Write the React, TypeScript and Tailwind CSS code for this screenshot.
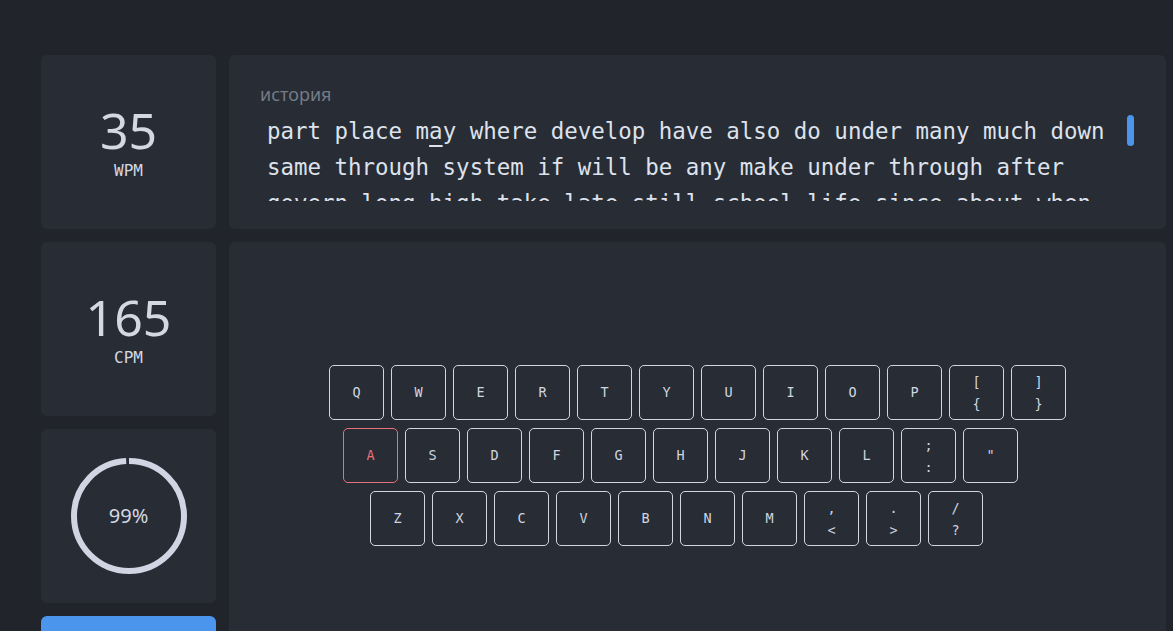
import React from "react";

/** stat cards + typing panel + on-screen keyboard */
const lines = [
  "part place may where develop have also do under many much down",
  "same through system if will be any make under through after",
  "govern long high take late still school life since about when",
];

type Key = { top: string; bottom?: string; miss?: boolean };

const rows: { offset: string; keys: Key[] }[] = [
  {
    offset: "ml-0",
    keys: [
      ..."QWERTYUIOP".split("").map((k) => ({ top: k })),
      { top: "[", bottom: "{" },
      { top: "]", bottom: "}" },
    ],
  },
  {
    offset: "ml-[14px]",
    keys: [
      { top: "A", miss: true },
      ..."SDFGHJKL".split("").map((k) => ({ top: k })),
      { top: ";", bottom: ":" },
      { top: '"' },
    ],
  },
  {
    offset: "ml-[41px]",
    keys: [
      ..."ZXCVBNM".split("").map((k) => ({ top: k })),
      { top: ",", bottom: "<" },
      { top: ".", bottom: ">" },
      { top: "/", bottom: "?" },
    ],
  },
];

const mono = "font-['DejaVu_Sans_Mono',monospace]";
const sans = "font-['Noto_Sans',sans-serif]";

const StatCard: React.FC<{ value: string; label: string }> = ({ value, label }) => (
  <div className="flex h-[174px] flex-col items-center justify-center rounded-md bg-[#282c34]">
    <div className={`${sans} text-[50px] leading-[52px] text-[#d3d8e3]`}>{value}</div>
    <div className={`${mono} mt-[5px] text-[16px] leading-5 text-[#d3d8e3]`}>{label}</div>
  </div>
);

const KeyCap: React.FC<{ k: Key }> = ({ k }) => (
  <div
    className={`flex h-[55px] w-[55px] flex-col items-center justify-center rounded-[5px] border ${mono} text-[13.5px] ${
      k.miss ? "border-[#e8707a] text-[#e8707a]" : "border-[#d0d6e0] text-[#d0d6e0]"
    }`}
  >
    {k.bottom ? (
      <>
        <span className="leading-4">{k.top}</span>
        <span className="mt-[6px] leading-4">{k.bottom}</span>
      </>
    ) : (
      <span>{k.top}</span>
    )}
  </div>
);

const Ring: React.FC<{ pct: number }> = ({ pct }) => {
  const r = 55;
  const c = 2 * Math.PI * r;
  return (
    <div className="relative h-[118px] w-[118px]">
      <svg width="118" height="118" viewBox="0 0 118 118" className="-rotate-90">
        <circle
          cx="59"
          cy="59"
          r={r}
          fill="none"
          stroke="#cfd5e2"
          strokeWidth="6"
          strokeDasharray={`${(c * pct) / 100} ${c}`}
        />
      </svg>
      <div className={`absolute inset-0 flex items-center justify-center ${sans} text-[20px] text-[#d3d8e3]`}>
        {pct}%
      </div>
    </div>
  );
};

const App: React.FC = () => {
  return (
    <div className="h-[631px] overflow-hidden bg-[#21252b] pl-[41px] pt-[55px]">
      <div className="flex gap-[13px]">
        {/* left column */}
        <div className="flex w-[175px] shrink-0 flex-col gap-[13px]">
          <StatCard value="35" label="WPM" />
          <StatCard value="165" label="CPM" />
          <div className="flex h-[174px] items-center justify-center rounded-md bg-[#282c34]">
            <Ring pct={99} />
          </div>
          <button className="flex h-[48px] items-center justify-end rounded-md bg-[#4b96ec] pr-[32px]">
            <svg width="12" height="24" viewBox="0 0 12 24" className="mt-[4px]">
              <rect x="2" y="2" width="8" height="20" rx="1" fill="#1f2329" />
            </svg>
          </button>
        </div>

        {/* right column */}
        <div className="flex w-[937px] shrink-0 flex-col gap-[13px]">
          <div className="h-[174px] rounded-md bg-[#282c34] pl-[31px] pr-[32px] pt-[27px]">
            <div className={`${sans} text-[18px] leading-6 text-[#747b87]`}>история</div>
            <div className="mt-[7px] flex">
              <div
                className={`${mono} h-[88px] w-[852px] overflow-hidden pl-[7px] text-[22.45px] leading-[36px] text-[#dde2ec]`}
              >
                {lines.map((l, i) =>
                  i === 0 ? (
                    <div key={i}>
                      part place m
                      <span className="underline decoration-2 underline-offset-[6px]">a</span>
                      y where develop have also do under many much down
                    </div>
                  ) : (
                    <div key={i}>{l}</div>
                  )
                )}
              </div>
              <div className="ml-[16px] mt-[2px] h-[31px] w-[7px] rounded-full bg-[#4b96ec]" />
            </div>
          </div>

          <div className="flex h-[427px] items-center justify-center rounded-md bg-[#282c34]">
            <div className="flex w-[739px] flex-col gap-[8px] pl-[1px]">
              {rows.map((row, i) => (
                <div key={i} className={`flex gap-[7px] ${row.offset}`}>
                  {row.keys.map((k, j) => (
                    <KeyCap key={j} k={k} />
                  ))}
                </div>
              ))}
            </div>
          </div>
        </div>
      </div>
    </div>
  );
};

export default App;
